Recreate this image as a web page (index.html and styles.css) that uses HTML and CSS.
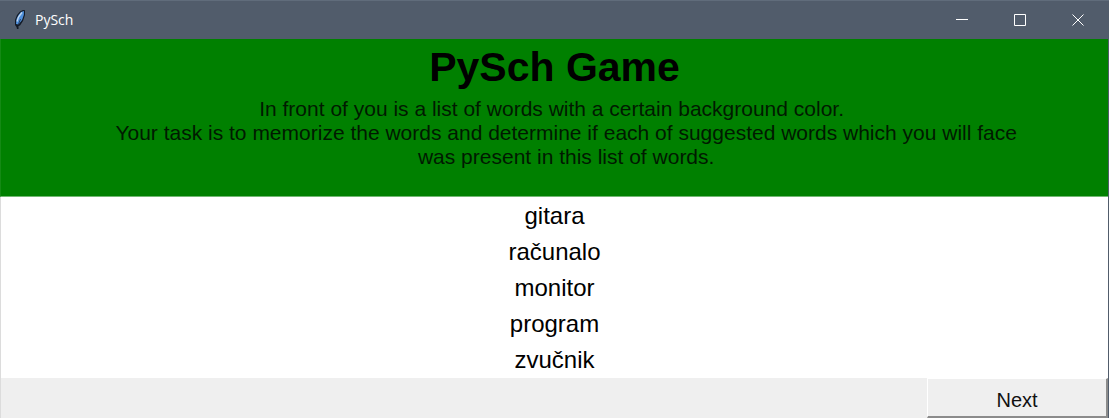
FILE: index.html
```html
<!DOCTYPE html>
<html lang="en">
<head>
<meta charset="utf-8">
<meta name="viewport" content="width=device-width, initial-scale=1">
<title>PySch</title>
<link rel="stylesheet" href="styles.css">
</head>
<body>
<div class="window">
  <header class="titlebar">
    <svg class="feather" viewBox="0 0 12 20" aria-hidden="true">
      <path d="M3 19 2.500 17 1 15 1 10 3 5 6 1.500 9 0 11 .3 11 5 9 11 6 15.500 4.500 16 4.500 19Z" fill="#131a26"/>
      <path d="M2 14 2.500 9 4.500 5 7 2 10 1 9.800 5 8 10 4.500 14.500Z" fill="#4f90dc"/>
      <path d="M3 11.500 4.500 7 8 2.500" fill="none" stroke="#c3d9f0" stroke-width="1.300"/>
      <path d="M4.200 15 6.500 9" fill="none" stroke="#1b2940" stroke-width=".8"/>
    </svg>
    <span class="caption">PySch</span>
    <div class="controls">
      <button class="control" type="button" aria-label="Minimize"><svg viewBox="0 0 12 12"><path d="M0 5.500H12"/></svg></button>
      <button class="control" type="button" aria-label="Maximize"><svg viewBox="0 0 12 12"><path d="M.5.5H11.500V11.500H.5Z"/></svg></button>
      <button class="control" type="button" aria-label="Close"><svg viewBox="0 0 12 12"><path d="M.5.5 11.500 11.500M11.500.5.5 11.500"/></svg></button>
    </div>
  </header>
  <main class="content">
    <section class="intro">
      <h1 class="title">PySch Game</h1>
      <p class="instructions">In front of you is a list of words with a certain background color.&nbsp;
&nbsp;&nbsp;&nbsp;&nbsp;Your task is to memorize the words and determine if each of suggested words which you will face
&nbsp;&nbsp;&nbsp;&nbsp;was present in this list of words.</p>
    </section>
    <ul class="words" lang="hr">
      <li>gitara</li>
      <li>računalo</li>
      <li>monitor</li>
      <li>program</li>
      <li>zvučnik</li>
    </ul>
    <footer class="actions">
      <button class="next" type="button">Next</button>
    </footer>
  </main>
</div>
</body>
</html>
```
FILE: styles.css
```css
* {
  box-sizing: border-box;
}

body {
  margin: 0;
  color: #000;
  font-family: "Liberation Sans", Arial, sans-serif;
}

.window {
  display: flex;
  flex-direction: column;
  min-height: 100vh;
  background: #515c6b;
}

.titlebar {
  display: flex;
  align-items: center;
  height: 39px;
  padding-left: 14px;
  border-top: 1px solid #606c7b;
  color: #fff;
}

.feather {
  width: 12px;
  height: 20px;
}

.caption {
  margin-left: 9px;
  font: 14px/20px "Open Sans", "Noto Sans", sans-serif;
}

.controls {
  display: flex;
  align-self: stretch;
  margin-left: auto;
  padding-right: 2px;
}

.control {
  display: flex;
  align-items: center;
  justify-content: center;
  width: 58px;
  padding: 0;
  border: 0;
  background: transparent;
}

.control svg {
  width: 12px;
  height: 12px;
  fill: none;
  stroke: #fff;
  stroke-width: 1;
}

.content {
  display: flex;
  flex: 1;
  flex-direction: column;
  margin-right: 1px;
  border-left: 1px solid #dcdcdc;
  background: #fff;
}

.intro {
  margin-left: -1px;
  padding: 4px 0 27px;
  border-bottom: 1px solid #72b872;
  border-left: 1px solid #148a14;
  background: #008000;
  text-align: center;
}

.title {
  margin: 0 0 6px;
  font-size: 41px;
  line-height: 48px;
}

.instructions {
  margin: 0;
  color: #001a00;
  font-size: 21px;
  line-height: 24px;
  white-space: pre-wrap;
}

.words {
  margin: 0;
  padding: 1px 0 0;
  font-size: 24px;
  line-height: 36px;
  list-style: none;
  text-align: center;
}

.actions {
  display: flex;
  flex: 1;
  justify-content: flex-end;
  background: #efefef;
}

.next {
  width: 181px;
  min-height: 40px;
  padding: 5px 0 0;
  border: 1px solid;
  border-width: 1px 2px 2px 1px;
  border-color: #fff #8b8b8b #8b8b8b #fff;
  background: #efefef;
  color: #111;
  font: 20px/24px "Liberation Sans", Arial, sans-serif;
}
```
